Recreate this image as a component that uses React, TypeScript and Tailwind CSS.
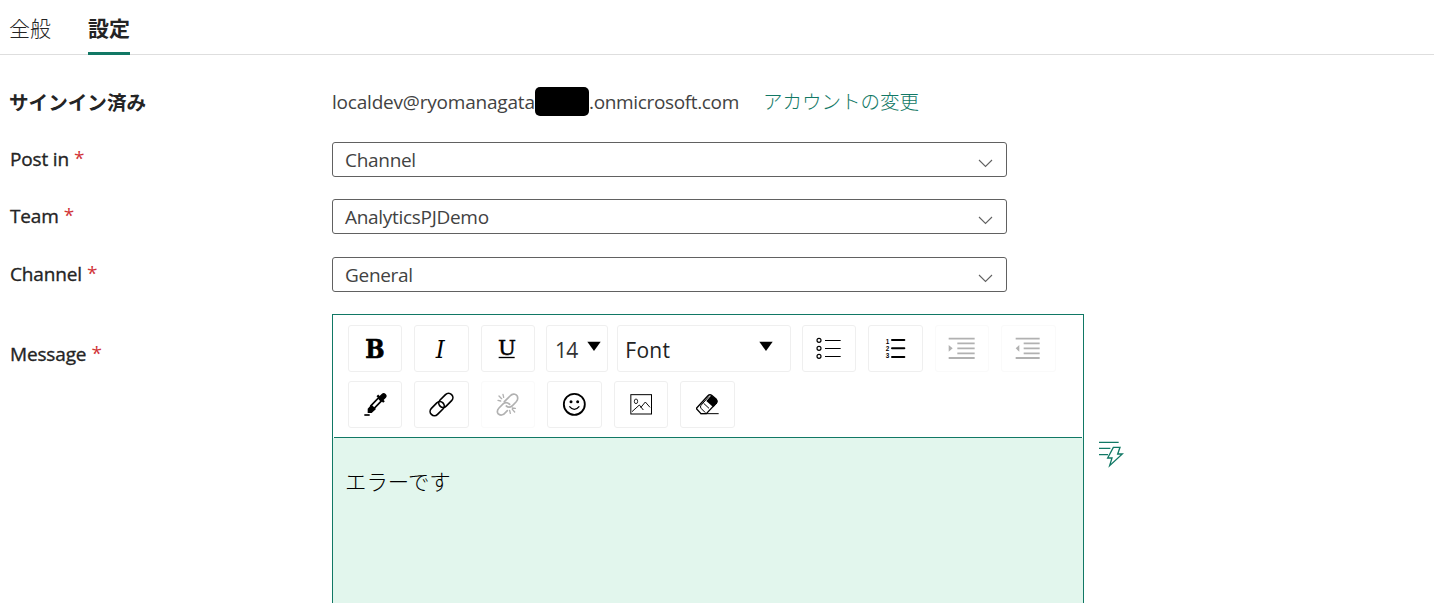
import React from 'react';

const latin = "font-['Open_Sans','Noto_Sans_CJK_JP',sans-serif]";
const japanese = "font-['Noto_Sans_CJK_JP',sans-serif]";

type ToolProps = {
  label: string;
  className?: string;
  disabled?: boolean;
  children: React.ReactNode;
};

function Tool({ label, className = 'w-[54px]', disabled, children }: ToolProps) {
  return (
    <button
      aria-label={label}
      disabled={disabled}
      className={`h-[47px] shrink-0 rounded-[3px] border ${disabled ? 'border-[#fafafa] text-[#b1b1b1]' : 'border-[#efefef] text-black'} ${className}`}
    >
      <svg width="52" height="45" viewBox="0 0 156 135" fill="none" stroke="currentColor" className="block overflow-visible">
        {children}
      </svg>
    </button>
  );
}

function Label({ text, className = '' }: { text: string; className?: string }) {
  return (
    <div className={`w-[332px] shrink-0 pl-[10px] text-[19px] leading-[34px] tracking-[-0.15px] text-[#242424] ${className}`}>
      <span className="[-webkit-text-stroke:0.35px_#242424]">{text}</span>
      <span className="relative -top-px ml-[5px] text-[#d13438]">*</span>
    </div>
  );
}

function Field({ label, value, className }: { label: string; value: string; className: string }) {
  return (
    <div className={`flex ${className}`}>
      <Label text={label} />
      <div className="flex h-[35px] w-[675px] items-center justify-between rounded-[3px] border border-[#616161] pr-[13px] pl-3">
        <span className="pt-[2px] text-[19px] leading-[33px] tracking-[-0.3px] text-[#424242]">{value}</span>
        <svg width="15" height="9" viewBox="0 0 15 9" fill="none" stroke="#616161" strokeWidth="1.1" className="mt-[7px]">
          <path d="M1 1L7.5 7.5L14 1" />
        </svg>
      </div>
    </div>
  );
}

function Toolbar() {
  return (
    <div className="mx-px h-[123px] border-b border-[#117865] pt-[10px] pl-[14px]">
      <div className="flex">
        <Tool label="Bold">
          <text x="49" y="97" textLength="58" lengthAdjust="spacingAndGlyphs" fill="currentColor" stroke="currentColor" strokeWidth="2" fontSize="78" fontWeight="700" fontFamily="DejaVu Serif">B</text>
        </Tool>
        <Tool label="Italic" className="ml-3 w-[55px]">
          <text x="62" y="97" textLength="27" lengthAdjust="spacingAndGlyphs" fill="currentColor" stroke="none" fontSize="75" fontStyle="italic" fontFamily="DejaVu Serif">I</text>
        </Tool>
        <Tool label="Underline" className="ml-3 w-[54px]">
          <text x="48" y="87" textLength="54" lengthAdjust="spacingAndGlyphs" fill="currentColor" stroke="currentColor" strokeWidth="1.500" fontSize="63" fontFamily="DejaVu Serif">U</text>
          <path d="M50 94.500H98" strokeWidth="4" />
        </Tool>
        <Tool label="Font size" className="ml-[11px] w-[62px]">
          <text x="24" y="95" textLength="70" fill="#333" stroke="none" fontSize="63" fontFamily="Open Sans">14</text>
          <path d="M121 47H161L141 75Z" fill="currentColor" stroke="none" />
        </Tool>
        <Tool label="Font" className="ml-[9px] w-[174px]">
          <text x="22" y="95" textLength="134" fill="#222" stroke="none" fontSize="63" fontFamily="Open Sans">Font</text>
          <path d="M424 47H464L444 75Z" fill="currentColor" stroke="none" />
        </Tool>
        <Tool label="Bulleted list" className="ml-[11px] w-[54px]">
          <g strokeWidth="3.5">
            <circle cx="48" cy="43" r="6" />
            <circle cx="48" cy="67" r="6" />
            <circle cx="48" cy="91" r="6" />
            <path d="M66 43.500H113M66 67.500H113M66 91.500H113" />
          </g>
        </Tool>
        <Tool label="Numbered list" className="ml-3 w-[55px]">
          <g fill="currentColor" stroke="none" fontSize="19" fontWeight="700" fontFamily="Liberation Sans">
            <text x="50" y="53">1</text>
            <text x="50" y="74">2</text>
            <text x="50" y="96">3</text>
          </g>
          <path d="M69 42H106M69 67H106M69 93H106" strokeWidth="6" strokeLinecap="round" />
        </Tool>
        <Tool label="Increase indent" disabled className="ml-3 w-[54px]">
          <path d="M38 38H116M64 52H116M64 67H116M64 82H116M38 96H116" strokeWidth="5.500" />
          <path d="M38 57L50 67L38 77Z" fill="currentColor" stroke="none" />
        </Tool>
        <Tool label="Decrease indent" disabled className="ml-3 w-[55px]">
          <path d="M41 38H113M65 52H113M65 67H113M65 82H113M41 96H113" strokeWidth="5.500" />
          <path d="M52 57L41 67L52 77Z" fill="currentColor" stroke="none" />
        </Tool>
      </div>
      <div className="mt-[9px] flex">
        <Tool label="Font color">
          <path d="M46 99H62" strokeWidth="5" />
          <path d="M56 93V80L67 68L81 81L68 93Z" fill="currentColor" stroke="none" />
          <path d="M66 71L89 47L98 56L75 80Z" strokeWidth="5" />
          <path d="M85 40L105 60" strokeWidth="7" />
          <path d="M97 49L104 42" strokeWidth="17" strokeLinecap="round" />
        </Tool>
        <Tool label="Insert link" className="ml-3 w-[55px]">
          <g strokeWidth="5">
            <rect x="68" y="42" width="49" height="26" rx="13" transform="rotate(-45 92.500 55)" />
            <rect x="42" y="67" width="49" height="26" rx="13" transform="rotate(-45 66.500 80)" />
          </g>
        </Tool>
        <Tool label="Remove link" disabled className="ml-3 w-[54px]">
          <g strokeWidth="5" strokeLinecap="round">
            <path d="M67 59L84 42Q91 34 99 37Q108 40 107 50Q107 54 102 60L90 72Q81 79 73 72" />
            <path d="M83 67Q73 58 64 65L51 78Q43 86 48 95Q55 102 65 97L76 86" />
            <path d="M63 37L65 46M51 42L59 50M48 55L56 57M83 85L85 94M91 82L98 90M91 78L100 79" strokeWidth="4" />
          </g>
        </Tool>
        <Tool label="Insert emoji" className="ml-3 w-[55px]">
          <circle cx="79" cy="67" r="31.500" strokeWidth="5.500" />
          <circle cx="69" cy="59" r="4.500" fill="currentColor" stroke="none" />
          <circle cx="89" cy="59" r="4.500" fill="currentColor" stroke="none" />
          <path d="M64 73Q79 91 94 73" strokeWidth="4" />
        </Tool>
        <Tool label="Insert image" className="ml-3 w-[54px]">
          <rect x="47.500" y="38" width="62" height="58" strokeWidth="3" />
          <ellipse cx="63" cy="58" rx="5" ry="7" strokeWidth="2.500" />
          <path d="M51 89L73 69L85 84M77 77L91 60L105 76" strokeWidth="2.800" />
        </Tool>
        <Tool label="Clear formatting" className="ml-3 w-[55px]">
          <path d="M47 78L80 42Q86 36 92 40L106 52Q110 57 107 62L76 95H60L47 81Z" strokeWidth="4" />
          <path d="M91 40L108 53Q111 58 108 64L97 76L76 57Z" fill="currentColor" stroke="none" />
          <path d="M84 43L60 70Q56 75 61 80L73 92M58 95H113M68 64L84 79" strokeWidth="3" />
        </Tool>
      </div>
    </div>
  );
}

export default function App() {
  return (
    <div className={`h-[603px] overflow-hidden bg-white ${latin}`}>
      <div className={`flex h-[55px] border-b border-[#dedede] pl-[9px] text-[21px] leading-[55px] text-[#242424] ${japanese}`}>
        <div className="w-[42px] font-light">全般</div>
        <div className="ml-[37px] h-[55px] w-[42px] border-b-[3px] border-[#117865] font-bold">設定</div>
      </div>

      <div className="mt-[31px] flex h-8 items-center">
        <div className={`w-[332px] pl-[9px] text-[19.6px] font-bold text-[#242424] ${japanese}`}>サインイン済み</div>
        <div className="relative -top-px flex items-center text-[19px] text-[#424242]">
          <span className="w-[203px] pt-[2px] tracking-[-0.2px]">localdev@ryomanagata</span>
          <span className="h-[29px] w-[54px] rounded-[5px] bg-black" />
          <span className="w-[150px] pt-[2px] tracking-[-0.35px]">.onmicrosoft.com</span>
        </div>
        <a href="#" className={`relative -top-px ml-[24px] text-[19.5px] font-light text-[#117865] ${japanese}`}>アカウントの変更</a>
      </div>

      <Field label="Post in" value="Channel" className="mt-6" />
      <Field label="Team" value="AnalyticsPJDemo" className="mt-[22px]" />
      <Field label="Channel" value="General" className="mt-[23px]" />

      <div className="mt-[22px] flex">
        <Label text="Message" className="pt-[23px]" />
        <div className="h-[300px] w-[752px] border border-[#117865]">
          <Toolbar />
          <div className={`h-[177px] bg-[#e2f6ed] pt-[27px] pl-3 text-[21.4px] leading-[31px] font-light text-black ${japanese}`}>エラーです</div>
        </div>
        <svg width="26" height="28" viewBox="0 0 78 84" fill="none" stroke="#117865" strokeWidth="4" className="mt-[126px] ml-[14px]">
          <path d="M3 7H62M3 25H37M3 44H30" />
          <path d="M46 22H66L59 42H73L35 77L42 54H29Z" />
        </svg>
      </div>
    </div>
  );
}
